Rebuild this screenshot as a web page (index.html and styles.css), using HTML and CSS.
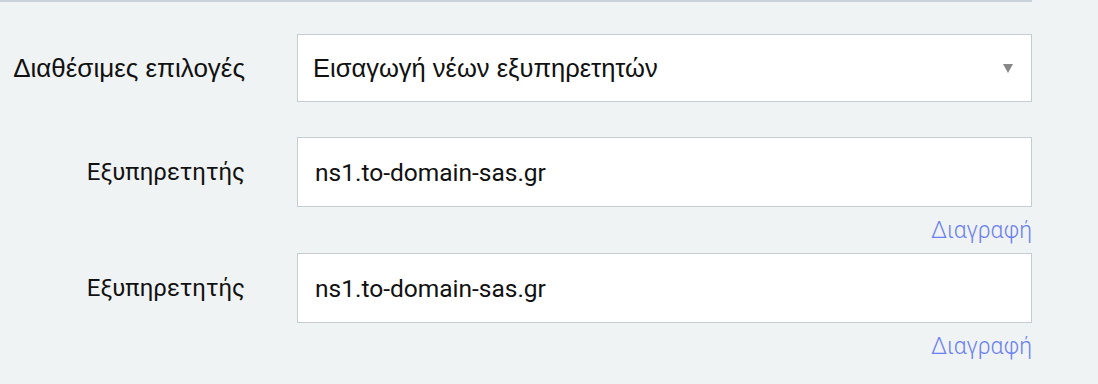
FILE: index.html
```html
<!DOCTYPE html>
<html lang="el">
<head>
  <meta charset="UTF-8">
  <meta name="viewport" content="width=device-width, initial-scale=1.0">
  <title>Εξυπηρετητές ονομάτων</title>
  <link rel="stylesheet" href="styles.css">
</head>
<body>

  <div class="panel">
    <div class="form-row">
      <label class="form-label label-options" for="ns-option">Διαθέσιμες επιλογές</label>
      <div class="form-field">
        <div class="select-box" id="ns-option">
          <span>Εισαγωγή νέων εξυπηρετητών</span>
          <span class="caret"></span>
        </div>
      </div>
    </div>

    <div class="form-row server-row">
      <label class="form-label" for="ns-1">Εξυπηρετητής</label>
      <div class="form-field">
        <input type="text" id="ns-1" value="ns1.to-domain-sas.gr">
        <a class="delete-link" href="#">Διαγραφή</a>
      </div>
    </div>

    <div class="form-row server-row">
      <label class="form-label" for="ns-2">Εξυπηρετητής</label>
      <div class="form-field">
        <input type="text" id="ns-2" value="ns1.to-domain-sas.gr">
        <a class="delete-link" href="#">Διαγραφή</a>
      </div>
    </div>
  </div>

</body>
</html>
```

FILE: styles.css
```css
body {
  margin: 0;
  padding: 0;
  background-color: #f0f3f4;
  font-family: Roboto, "Liberation Sans", sans-serif;
  color: #111;
}
.panel {
  width: 1032px;
  border-top: 2px solid #c9d1d9;
  padding-top: 32px;
}
.form-row {
  display: grid;
  grid-template-columns: 245px 735px;
  column-gap: 52px;
  margin-bottom: 35px;
}
.server-row {
  margin-bottom: 8px;
}
.form-label {
  text-align: right;
  font-size: 24px;
  line-height: 70px;
  height: 70px;
  white-space: nowrap;
}
.label-options {
  font-family: "Liberation Sans", Arial, sans-serif;
  font-size: 26px;
  line-height: 68px;
  height: 68px;
}
.form-field {
  display: flex;
  flex-direction: column;
}
.select-box {
  box-sizing: border-box;
  height: 68px;
  background-color: white;
  border: 1px solid #c5cdd3;
  padding: 0 18px 0 15px;
  display: flex;
  align-items: center;
  justify-content: space-between;
  font-family: "Liberation Sans", Arial, sans-serif;
  font-size: 25.5px;
}
.caret {
  width: 0;
  height: 0;
  border-left: 5px solid transparent;
  border-right: 5px solid transparent;
  border-top: 9px solid #888;
}
input[type="text"] {
  box-sizing: border-box;
  width: 100%;
  height: 70px;
  padding: 0 15px 0 17px;
  border: 1px solid #c5cdd3;
  background-color: white;
  font-family: Roboto, sans-serif;
  font-size: 24.5px;
  color: #111;
  outline: none;
}
.delete-link {
  align-self: flex-end;
  margin-top: 10px;
  font-size: 23px;
  font-weight: 300;
  line-height: 28px;
  color: #6a7ff2;
  text-decoration: none;
}
```
